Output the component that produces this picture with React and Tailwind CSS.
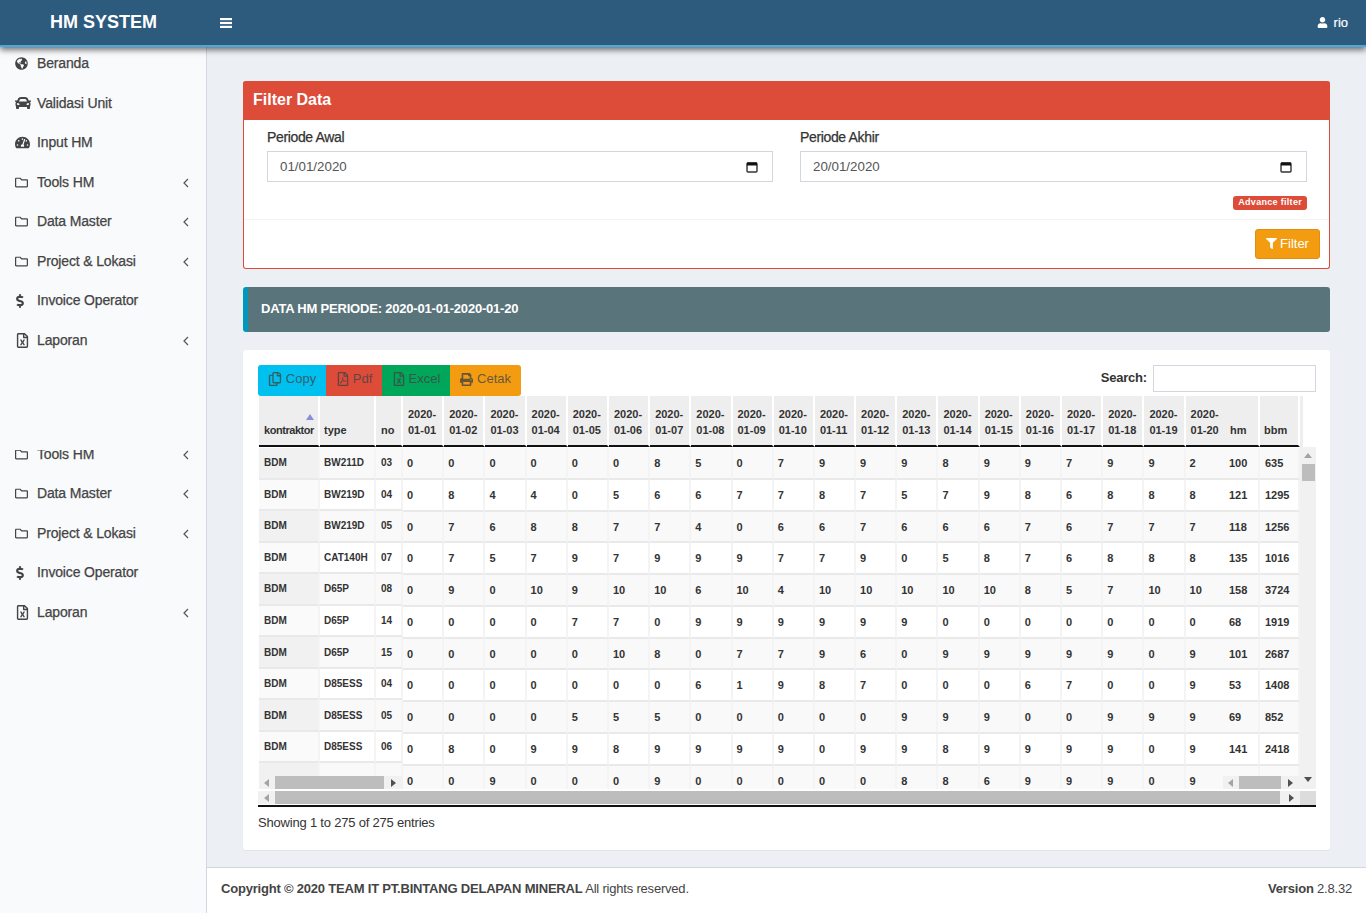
import {
  FaGlobeAmericas, FaCar, FaTachometerAlt, FaRegFolder, FaDollarSign, FaRegFileExcel,
  FaUser, FaFilter, FaRegCopy, FaRegFilePdf, FaPrint,
} from 'react-icons/fa';

const menuA = [
  { label: 'Beranda', icon: FaGlobeAmericas, size: 13 },
  { label: 'Validasi Unit', icon: FaCar, size: 16 },
  { label: 'Input HM', icon: FaTachometerAlt, size: 15 },
  { label: 'Tools HM', icon: FaRegFolder, size: 13, arrow: true },
  { label: 'Data Master', icon: FaRegFolder, size: 13, arrow: true },
  { label: 'Project & Lokasi', icon: FaRegFolder, size: 13, arrow: true },
  { label: 'Invoice Operator', icon: FaDollarSign, size: 14, nudge: true },
  { label: 'Laporan', icon: FaRegFileExcel, size: 15, arrow: true },
];
const menuB = menuA.slice(3);

const days = Array.from({ length: 20 }, (_, i) => `01-${String(i + 1).padStart(2, '0')}`);

const rows = [
  ['BW211D', '03', [0, 0, 0, 0, 0, 0, 8, 5, 0, 7, 9, 9, 9, 8, 9, 9, 7, 9, 9, 2], 100, 635],
  ['BW219D', '04', [0, 8, 4, 4, 0, 5, 6, 6, 7, 7, 8, 7, 5, 7, 9, 8, 6, 8, 8, 8], 121, 1295],
  ['BW219D', '05', [0, 7, 6, 8, 8, 7, 7, 4, 0, 6, 6, 7, 6, 6, 6, 7, 6, 7, 7, 7], 118, 1256],
  ['CAT140H', '07', [0, 7, 5, 7, 9, 7, 9, 9, 9, 7, 7, 9, 0, 5, 8, 7, 6, 8, 8, 8], 135, 1016],
  ['D65P', '08', [0, 9, 0, 10, 9, 10, 10, 6, 10, 4, 10, 10, 10, 10, 10, 8, 5, 7, 10, 10], 158, 3724],
  ['D65P', '14', [0, 0, 0, 0, 7, 7, 0, 9, 9, 9, 9, 9, 9, 0, 0, 0, 0, 0, 0, 0], 68, 1919],
  ['D65P', '15', [0, 0, 0, 0, 0, 10, 8, 0, 7, 7, 9, 6, 0, 9, 9, 9, 9, 9, 0, 9], 101, 2687],
  ['D85ESS', '04', [0, 0, 0, 0, 0, 0, 0, 6, 1, 9, 8, 7, 0, 0, 0, 6, 7, 0, 0, 9], 53, 1408],
  ['D85ESS', '05', [0, 0, 0, 0, 5, 5, 5, 0, 0, 0, 0, 0, 9, 9, 9, 0, 0, 9, 9, 9], 69, 852],
  ['D85ESS', '06', [0, 8, 0, 9, 9, 8, 9, 9, 9, 9, 0, 9, 9, 8, 9, 9, 9, 9, 0, 9], 141, 2418],
  ['', '', [0, 0, 9, 0, 0, 0, 9, 0, 0, 0, 0, 0, 8, 8, 6, 9, 9, 9, 0, 9], '', ''],
];

function MenuItem({ item }) {
  const Icon = item.icon;
  return (
    <div className="h-[39.5px] flex items-center text-[14px] tracking-[-0.15px] text-[#444] [-webkit-text-stroke:0.25px_#444]">
      <span className={`w-[37px] shrink-0 [-webkit-text-stroke:0] ${item.nudge ? 'pl-[13px]' : 'pl-[15px]'}`}>
        <Icon size={item.size} className="text-[#444]" />
      </span>
      <span className="flex-1">{item.label}</span>
      {item.arrow && (
        <svg width="6" height="10" viewBox="0 0 6 10" className="mr-[17px] mt-[1px]">
          <path d="M5 1 1 5l4 4" fill="none" stroke="#555" strokeWidth="1.2" />
        </svg>
      )}
    </div>
  );
}

function Arrow({ dir, light }) {
  const d = { left: 'M6 0V8L1 4Z', right: 'M1 0V8L6 4Z', up: 'M0 6H8L4 1Z', down: 'M0 1H8L4 6Z' }[dir];
  return (
    <svg width="8" height="8" viewBox="0 0 8 8" className="shrink-0">
      <path d={d} fill={light ? '#a3a3a3' : '#505050'} />
    </svg>
  );
}

function HBar({ className, left, thumb, tail, lightLeft }) {
  return (
    <div className={`flex items-center bg-[#f1f1f1] ${className}`}>
      <div className="flex justify-center" style={{ width: left }}><Arrow dir="left" light={lightLeft} /></div>
      <div className="h-full bg-[#bdbdbd]" style={{ width: thumb }} />
      <div className="flex-1" />
      <div className="flex justify-center" style={{ width: tail }}><Arrow dir="right" /></div>
    </div>
  );
}

function Head({ w, children, className = 'pl-[5px]' }) {
  return (
    <div
      className={`h-[51px] shrink-0 bg-[#eee] border-r-2 border-white border-b-2 border-b-[#111] flex flex-col justify-end pb-[7px] text-[11px] font-bold leading-[16px] text-[#333] ${className}`}
      style={{ width: w }}
    >
      {children}
    </div>
  );
}

function Cell({ w, shade, children, className = 'pl-[5px] text-[11px] pt-[1px]' }) {
  return (
    <div
      className={`h-full shrink-0 border-r-2 border-[#f4f4f4] border-b-2 border-b-[#e9e9e9] flex items-center text-[#333] font-bold ${shade} ${className}`}
      style={{ width: w }}
    >
      {children}
    </div>
  );
}

const dayW = 41.2;
const fixedCell = 'pl-[5px] text-[10px]';
const typeCell = 'pl-[4px] text-[10px]';

export default function App() {
  return (
    <div className="h-[913px] flex flex-col overflow-hidden bg-[#ecf0f5] text-[#333] font-['Liberation_Sans',Arial,sans-serif]">
      <header className="h-[47px] shrink-0 relative z-10 bg-[#2c5b7e] border-b-[2px] border-[#4aa8e0] shadow-[0_3px_6px_rgba(0,0,0,0.55)] flex items-center text-white">
        <div className="w-[207px] text-center text-[18px] font-bold pb-[1px]">HM SYSTEM</div>
        <svg width="12" height="10" viewBox="0 0 12 10" className="ml-[13px]">
          <rect y="0" width="12" height="2.2" fill="#fff" />
          <rect y="3.9" width="12" height="2.2" fill="#fff" />
          <rect y="7.8" width="12" height="2.2" fill="#fff" />
        </svg>
        <div className="ml-auto mr-[18px] flex items-center gap-[6px] text-[13px] [-webkit-text-stroke:0.2px_#fff]">
          <FaUser size={11} />
          <span>rio</span>
        </div>
      </header>

      <div className="flex-1 flex min-h-0">
        <aside className="w-[207px] shrink-0 bg-[#f9fafc] border-r border-[#d2d6de] overflow-hidden">
          <div className="-mt-[3.25px]">
            {menuA.map((item) => <MenuItem key={item.label} item={item} />)}
          </div>
          <div className="h-[90px]" />
          <div className="overflow-hidden">
            <div className="-mt-[15.5px]">
              {menuB.map((item) => <MenuItem key={item.label} item={item} />)}
            </div>
          </div>
        </aside>

        <main className="flex-1 min-w-0 flex flex-col">
          <div className="flex-1 px-[36px] pt-[34px]">
            <section className="h-[188px] rounded-[3px] bg-white border border-[#dd4b39] border-t-0 flex flex-col">
              <div className="h-[39px] -mx-px rounded-t-[3px] bg-[#dd4b39] text-white text-[16px] font-bold pl-[10px] pb-[1px] flex items-center">Filter Data</div>
              <div className="h-[100px] border-b border-[#f4f4f4] pl-[23px] pr-[22px]">
                <div className="grid grid-cols-[506px_507px] gap-x-[27px] pt-[7px]">
                  {['Periode Awal', 'Periode Akhir'].map((label, i) => (
                    <div key={label}>
                      <div className="h-[24px] text-[14px] tracking-[-0.35px] text-[#333] [-webkit-text-stroke:0.25px_#333]">{label}</div>
                      <div className="h-[31px] border border-[#d2d6de] pl-[12px] pr-[14px] flex items-center justify-between text-[13.33px] text-[#555]">
                        <span>{i === 0 ? '01/01/2020' : '20/01/2020'}</span>
                        <svg width="12" height="12" viewBox="0 0 12 12">
                          <rect x="1" y="2" width="10" height="9" rx="1" fill="none" stroke="#333" strokeWidth="1.4" />
                          <rect x="1" y="1.5" width="10" height="3" fill="#111" />
                        </svg>
                      </div>
                    </div>
                  ))}
                </div>
                <div className="flex justify-end mt-[14px]">
                  <span className="h-[14px] px-[5px] rounded-[3px] bg-[#dd4b39] text-white text-[9px] font-bold leading-[13px] tracking-[0.3px]">Advance filter</span>
                </div>
              </div>
              <div className="flex-1 flex items-start justify-end pt-[9px] pr-[9px]">
                <button className="w-[65px] h-[30px] rounded-[3px] bg-[#f39c12] border border-[#e08e0b] text-white text-[13px] pb-[1px] flex items-center justify-center gap-[3px]">
                  <FaFilter size={11} />Filter
                </button>
              </div>
            </section>

            <div className="mt-[18px] h-[45px] rounded-[3px] bg-[#5a747b] border-l-[5px] border-[#0097bc] pl-[13px] pb-[1px] flex items-center text-white text-[13px] tracking-[-0.2px] font-bold">
              DATA HM PERIODE: 2020-01-01-2020-01-20
            </div>

            <section className="mt-[18px] h-[500px] rounded-[3px] bg-white pl-[15px] pr-[14px] pt-[15px] shadow-[0_1px_1px_rgba(0,0,0,0.05)]">
              <div className="h-[31px] flex items-start justify-between">
                <div className="flex h-[31px] text-[13px] text-[#444]/80">
                  <button className="w-[68px] bg-[#00c0ef] rounded-l-[3px] pb-[3px] flex items-center justify-center gap-[4px]"><FaRegCopy size={14} />Copy</button>
                  <button className="w-[56px] bg-[#dd4b39] pb-[3px] flex items-center justify-center gap-[3px]"><FaRegFilePdf size={14} />Pdf</button>
                  <button className="w-[68px] bg-[#00a65a] pb-[3px] flex items-center justify-center gap-[3px]"><FaRegFileExcel size={14} />Excel</button>
                  <button className="w-[71px] bg-[#f39c12] rounded-r-[3px] pb-[3px] flex items-center justify-center gap-[4px]"><FaPrint size={13} />Cetak</button>
                </div>
                <div className="flex items-center gap-[6px]">
                  <span className="text-[13px] tracking-[-0.2px] font-bold text-[#333] -mt-[2px]">Search:</span>
                  <div className="w-[163px] h-[27px] border border-[#d2d6de]" />
                </div>
              </div>

              <div className="h-[411px] border-b-2 border-[#111] flex flex-col">
                <div className="h-[393px] flex">
                  <div className="w-[145px] pl-px shrink-0 flex flex-col">
                    <div className="flex relative">
                      <Head w={61} className="pl-[5px] tracking-[-0.45px]">kontraktor</Head>
                      <Head w={56} className="pl-[4px]">type</Head>
                      <Head w={27}>no</Head>
                      <span className="absolute left-[47px] top-[18px] border-x-[4px] border-x-transparent border-b-[6px] border-b-[#8c8cdc]" />
                    </div>
                    <div className="h-[329px] pt-px overflow-hidden">
                      {rows.map((r, i) => (
                        <div key={i} className="flex h-[31.55px]">
                          <Cell w={61} className={fixedCell} shade={i % 2 ? 'bg-[#fafafa]' : 'bg-[#f1f1f1]'}>{r[0] && 'BDM'}</Cell>
                          <Cell w={56} className={typeCell} shade={i % 2 ? 'bg-white' : 'bg-[#f9f9f9]'}>{r[0]}</Cell>
                          <Cell w={27} className={fixedCell} shade={i % 2 ? 'bg-white' : 'bg-[#f9f9f9]'}>{r[1]}</Cell>
                        </div>
                      ))}
                    </div>
                    <HBar className="h-[13px]" left={16} thumb={109} tail={18} lightLeft />
                  </div>

                  <div className="w-[820px] shrink-0 flex flex-col overflow-hidden">
                    <div className="flex">
                      {days.map((d) => (
                        <Head key={d} w={dayW}><span className="block whitespace-nowrap">2020-</span><span className="block whitespace-nowrap">{d}</span></Head>
                      ))}
                    </div>
                    <div className="flex-1 pt-px overflow-hidden">
                      {rows.map((r, i) => (
                        <div key={i} className="flex h-[31.75px]">
                          {r[2].map((v, j) => (
                            <Cell key={j} w={dayW} className="pl-[4px] text-[11px] pt-[1px]" shade={i % 2 ? 'bg-white' : 'bg-[#f9f9f9]'}>{v}</Cell>
                          ))}
                        </div>
                      ))}
                    </div>
                  </div>

                  <div className="w-[77px] shrink-0 flex flex-col">
                    <div className="flex">
                      <Head w={37} className="pl-[7px]">hm</Head>
                      <Head w={40} className="pl-[4px]">bbm</Head>
                    </div>
                    <div className="h-[329px] pt-px overflow-hidden">
                      {rows.map((r, i) => (
                        <div key={i} className="flex h-[31.75px]">
                          <Cell w={37} className="pl-[6px] text-[11px] pt-[1px]" shade={i % 2 ? 'bg-white' : 'bg-[#f9f9f9]'}>{r[3]}</Cell>
                          <Cell w={40} shade={i % 2 ? 'bg-white' : 'bg-[#f9f9f9]'}>{r[4]}</Cell>
                        </div>
                      ))}
                    </div>
                    <HBar className="h-[13px]" left={16} thumb={42} tail={18} lightLeft />
                  </div>

                  <div className="flex-1 flex flex-col">
                    <div className="h-[51px] w-[3px] bg-[#eee] shrink-0" />
                    <div className="flex-1 bg-[#f1f1f1] flex flex-col items-center pt-[5px] pb-[5px]">
                      <Arrow dir="up" light />
                      <div className="w-[13px] h-[17px] bg-[#bdbdbd] mt-[4px]" />
                      <div className="flex-1" />
                      <Arrow dir="down" />
                    </div>
                  </div>
                </div>
                <div className="h-[16px] flex pt-[2px]">
                  <HBar className="flex-1 h-[13px]" left={17} thumb={1005} tail={17} lightLeft />
                  <div className="w-[16px] h-[14px] bg-[#dcdcdc]" />
                </div>
              </div>

              <div className="mt-[6px] text-[13px] tracking-[-0.2px] text-[#333]">Showing 1 to 275 of 275 entries</div>
            </section>
          </div>

          <footer className="h-[46px] shrink-0 bg-white border-t border-[#d2d6de] px-[14px] pb-[3px] flex items-center justify-between text-[13px] tracking-[-0.2px] text-[#444]">
            <div><b>Copyright © 2020 TEAM IT PT.BINTANG DELAPAN MINERAL</b> All rights reserved.</div>
            <div><b>Version</b> 2.8.32</div>
          </footer>
        </main>
      </div>
    </div>
  );
}
